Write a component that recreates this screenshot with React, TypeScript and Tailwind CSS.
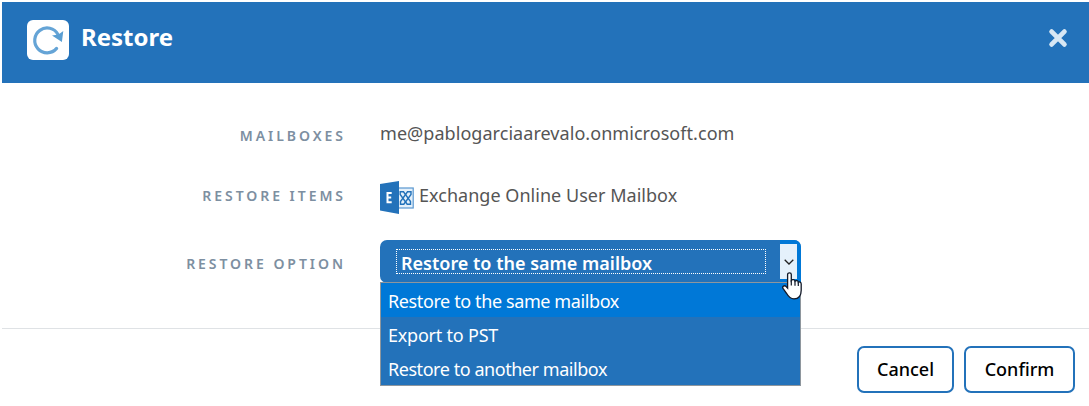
import type { ReactNode } from "react";

const options = [
  { label: "Restore to the same mailbox", style: "bg-[#0078d7] tracking-[-0.39px]" },
  { label: "Export to PST", style: "tracking-[-0.22px]" },
  { label: "Restore to another mailbox", style: "tracking-[-0.45px]" },
];

function RestoreIcon() {
  return (
    <svg viewBox="0 0 42 40" className="h-10 w-[42px] rounded-[6px] bg-white" aria-hidden="true">
      <path d="M29.6 28.4A12.4 12.4 0 1 1 31 14.4" fill="none" stroke="#65a4d6" strokeWidth="3.2" strokeLinecap="round" />
      <path d="M36.3 11L34.9 22L25 15.6L31.5 14.6Z" fill="#5b9fd3" />
    </svg>
  );
}

function ExchangeIcon() {
  return (
    <svg viewBox="0 0 34 34" className="h-[34px] w-[34px] shrink-0" aria-hidden="true">
      <rect x="17" y="7" width="16.2" height="20" fill="#e4f0fa" stroke="#5997d0" strokeWidth="1.2" />
      <g fill="none" stroke="#2372ba" strokeWidth="1.4">
        <path d="M20.2 13.5V10.8H23.5L30.5 20.5V23.2H27.2Z" />
        <path d="M31 13.5V10.8H27.5L20.5 20.5V23.2H23.8Z" />
      </g>
      <path d="M0 3L19 0V33L0 29.5Z" fill="#2372ba" />
      <path d="M11.7 12H7.5V21.2H11.7M7.5 16.6H11.2" fill="none" stroke="#fff" strokeWidth="2" />
    </svg>
  );
}

function HandCursor() {
  return (
    <svg viewBox="0 0 20 28" className="absolute left-[402px] top-[32px] z-20 h-7 w-5" aria-hidden="true">
      <path
        d="M5.6 2.6C5.6.4 9.3.4 9.3 2.6V8.5C10.2 7.2 12.8 7.5 13 9.2C14.2 8.1 16.2 8.7 16.3 10.3C17.5 9.5 19.2 10.3 19.2 11.9V18.2C19.2 23.5 16.8 26.8 12 26.8C8.3 26.8 6.3 24.4 4.7 21.5L1 16.4C-.1 14.6 2.4 12.8 3.9 14.4L5.6 16.2Z"
        fill="white"
        stroke="#111827"
        strokeWidth="1.3"
      />
      <path d="M9.3 8V13.5M13 9.2V13.8M16.3 10.3V14" stroke="#111827" strokeWidth="1.2" />
    </svg>
  );
}

function Label({ children, className }: { children: ReactNode; className: string }) {
  return (
    <div className={`text-right text-[14px] font-semibold leading-5 tracking-[2.95px] text-[#7d8fa1] ${className}`}>
      {children}
    </div>
  );
}

export default function App() {
  return (
    <div className="h-[406px] w-[1089px] overflow-hidden bg-white pl-0.5 pt-0.5 font-['Noto_Sans',sans-serif]">
      <header className="flex h-[81px] items-start bg-[#2372ba] pl-[25px] pt-[18px]">
        <RestoreIcon />
        <h1 className="ml-3 mt-px text-[24px] font-bold leading-8 text-white">Restore</h1>
        <button aria-label="Close" className="ml-auto mr-[21px] mt-[8px]">
          <svg viewBox="0 0 20 20" className="h-5 w-5" aria-hidden="true">
            <path d="M3.6 3.6L16.4 16.4M16.4 3.6L3.6 16.4" stroke="#d7e7f4" strokeWidth="4.8" strokeLinecap="round" />
          </svg>
        </button>
      </header>

      <main className="relative h-[246px] border-b border-[#dfe2e5]">
        <div className="grid grid-cols-[344px_1fr] gap-x-[34px] text-[18px] leading-7 text-[#555]">
          <Label className="mt-[43px]">MAILBOXES</Label>
          <div className="mt-[36px] whitespace-nowrap tracking-[0.05px]">me@pablogarciaarevalo.onmicrosoft.com</div>
          <Label className="mt-[39px]">RESTORE ITEMS</Label>
          <div className="mt-[34px] flex h-[35px] items-start gap-[5px]">
            <ExchangeIcon />
            <span className="whitespace-nowrap tracking-[0.03px]">Exchange Online User Mailbox</span>
          </div>
          <Label className="mt-[38px]">RESTORE OPTION</Label>
          <div className="relative mt-[24px] w-[421px]">
            <div className="flex h-[43px] items-start rounded-t-[7px] rounded-bl-[7px] bg-[#2372ba] pl-4 pt-[9px] text-white">
              <div className="h-[25px] w-[370px] whitespace-nowrap border border-dotted border-white pl-[4px] text-[18px] font-semibold leading-[27px]">
                Restore to the same mailbox
              </div>
              <div className="-mt-[9px] ml-auto h-[43px] w-[21px] rounded-tr-[7px] bg-[#0078d7] pt-[4px]">
                <div className="flex h-[35px] w-[17px] items-center justify-center bg-[#e5f1fb]">
                  <svg viewBox="0 0 10 6" className="h-1.5 w-2.5" aria-hidden="true">
                    <path d="M.7.8L5 5L9.3.8" fill="none" stroke="#222" strokeWidth="1.3" />
                  </svg>
                </div>
              </div>
            </div>
            <ul className="absolute left-0 top-[42px] z-10 w-[421px] border border-[#8e969d] bg-[#2372ba] text-[18px] leading-[37px] text-white">
              {options.map((option) => (
                <li key={option.label} className={`h-[34px] whitespace-nowrap pl-[7px] ${option.style}`}>
                  {option.label}
                </li>
              ))}
            </ul>
            <HandCursor />
          </div>
        </div>
      </main>

      <footer className="flex justify-end gap-[10px] pr-[14px] pt-[17px] text-[18px] font-medium leading-6 text-black">
        <button className="h-[47px] w-[97px] rounded-[7px] border-2 border-[#2372ba] pb-0.5">Cancel</button>
        <button className="h-[47px] w-[111px] rounded-[7px] border-2 border-[#2372ba] pb-0.5">Confirm</button>
      </footer>
    </div>
  );
}
